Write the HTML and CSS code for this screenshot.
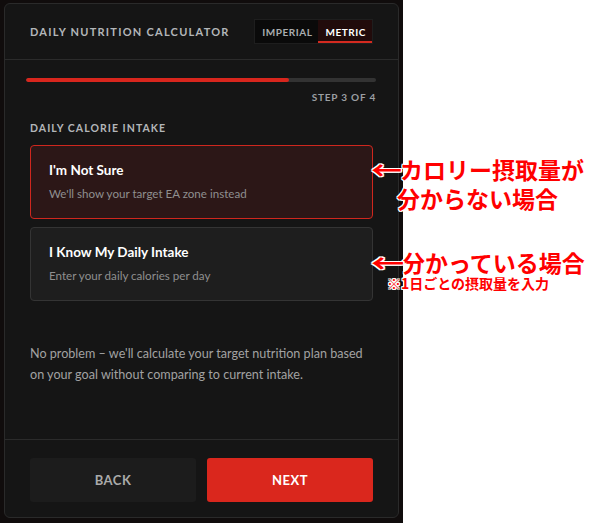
FILE: index.html
```html
<!DOCTYPE html>
<html lang="ja">
<head>
<meta charset="utf-8">
<title>Daily Nutrition Calculator</title>
<link rel="stylesheet" href="styles.css">
</head>
<body>
<div class="page">
  <div class="backdrop">
    <div class="panel">
      <header class="panel-head">
        <h1 class="title">DAILY NUTRITION CALCULATOR</h1>
        <div class="units">
          <span class="unit">IMPERIAL</span>
          <span class="unit unit-active">METRIC</span>
        </div>
      </header>
      <main class="panel-body">
        <div class="progress">
          <div class="track"><div class="fill" style="width:75%"></div></div>
          <div class="step">STEP 3 OF 4</div>
        </div>
        <h2 class="section">DAILY CALORIE INTAKE</h2>
        <div class="options">
          <div class="option option-selected">
            <div class="option-title">I'm Not Sure</div>
            <div class="option-sub">We'll show your target EA zone instead</div>
          </div>
          <div class="option">
            <div class="option-title">I Know My Daily Intake</div>
            <div class="option-sub">Enter your daily calories per day</div>
          </div>
        </div>
        <p class="note">No problem – we'll calculate your target nutrition plan based on your goal without comparing to current intake.</p>
      </main>
      <footer class="panel-foot">
        <button class="btn btn-back">BACK</button>
        <button class="btn btn-next">NEXT</button>
      </footer>
    </div>
  </div>
  <div class="anno anno-1">
    <div class="anno-line"><span class="arrow">←</span>カロリー摂取量が</div>
    <div class="anno-line anno-indent">分からない場合</div>
  </div>
  <div class="anno anno-2">
    <div class="anno-line anno-tight"><span class="arrow arrow-wide">←</span>分かっている場合</div>
    <div class="anno-small">※1日ごとの摂取量を入力</div>
  </div>
</div>
</body>
</html>
```

FILE: styles.css
```css
* { box-sizing: border-box; }
html, body { margin: 0; padding: 0; background: #ffffff; }
body { font-family: "Lato", "Liberation Sans", sans-serif; }

.page {
  position: relative;
  width: 590px;
  height: 523px;
  background: #ffffff;
}

.backdrop {
  width: 403px;
  height: 523px;
  background: #100c0c;
  padding: 3px 4px 5px 4px;
}

.panel {
  width: 395px;
  height: 515px;
  background: #151515;
  border: 1px solid #2a2a2a;
  border-radius: 6px;
  display: flex;
  flex-direction: column;
}

.panel-head {
  height: 56px;
  border-bottom: 1px solid #2b2b2b;
  display: flex;
  align-items: center;
  justify-content: space-between;
  padding: 0 25px 0 25px;
}

.title {
  margin: 0;
  font-size: 11px;
  font-weight: 700;
  letter-spacing: 1.25px;
  color: #b3b6b9;
}

.units {
  display: flex;
  background: #0a0a0a;
  border: 1px solid #1e1e1e;
  height: 25px;
}
.unit {
  display: flex;
  align-items: center;
  padding: 0 6px 0 7px;
  font-size: 10px;
  font-weight: 700;
  letter-spacing: 0.55px;
  color: #a9adb0;
}
.unit-active {
  background: #210b0b;
  color: #ffffff;
  border-bottom: 2px solid #d42a20;
  padding-top: 2px;
}

.panel-body {
  flex: 1;
  padding: 18px 25px 0 25px;
  display: flex;
  flex-direction: column;
}

.progress { margin: 0 -3px 0 -4px; }
.track {
  height: 4px;
  background: #333333;
  border-radius: 2px;
  overflow: hidden;
}
.fill {
  height: 100%;
  background: #d8261d;
  border-radius: 2px;
}
.step {
  margin-top: 9px;
  text-align: right;
  font-size: 10px;
  line-height: 12px;
  font-weight: 700;
  letter-spacing: 0.8px;
  color: #9b9fa2;
}

.section {
  margin: 19px 0 0 0;
  font-size: 10.5px;
  line-height: 13px;
  font-weight: 700;
  letter-spacing: 1.05px;
  color: #b3b6b9;
}

.options {
  margin-top: 10px;
  display: flex;
  flex-direction: column;
  gap: 8px;
}
.option {
  height: 74px;
  background: #1e1e1e;
  border: 1px solid #343434;
  border-radius: 4px;
  padding: 16px 18px 0 18px;
}
.option-selected {
  background: #2c1717;
  border-color: #cf271e;
}
.option-title {
  font-size: 13.5px;
  line-height: 16px;
  font-weight: 700;
  color: #ffffff;
}
.option-sub {
  margin-top: 9px;
  font-size: 11.6px;
  line-height: 14px;
  color: #8f8f8f;
}

.note {
  margin: 42px 0 0 0;
  font-size: 12.6px;
  line-height: 21px;
  color: #a2a2a2;
}

.panel-foot {
  border-top: 1px solid #2b2b2b;
  padding: 18px 25px 15px 25px;
  display: flex;
  gap: 11px;
}
.btn {
  flex: 1;
  height: 44px;
  border: none;
  border-radius: 3px;
  font-family: "Lato", "Liberation Sans", sans-serif;
  font-size: 13px;
  font-weight: 700;
  letter-spacing: 0.5px;
}
.btn-back { background: #1c1c1c; color: #aaaaaa; }
.btn-next { background: #da271d; color: #ffffff; }

.anno {
  position: absolute;
  font-family: "Noto Sans CJK JP", sans-serif;
  font-weight: 700;
  color: #ff0000;
  text-shadow: 1px 0 0 #fff, -1px 0 0 #fff, 0 1px 0 #fff, 0 -1px 0 #fff,
               1px 1px 0 #fff, -1px -1px 0 #fff, 1px -1px 0 #fff, -1px 1px 0 #fff;
  white-space: nowrap;
}
.anno-1 { left: 371px; top: 155px; }
.anno-2 { left: 371px; top: 249px; }
.anno-line {
  font-size: 23px;
  line-height: 29px;
}
.anno-tight { line-height: 26px; }
.arrow {
  display: inline-block;
  width: 29px;
  transform: scale(1.35, 1.1);
  transform-origin: 0 60%;
}
.arrow-wide { width: 31px; transform: scale(1.45, 1.1); }
.anno-indent { padding-left: 26px; }
.anno-small {
  margin-left: 16px;
  font-size: 14px;
  line-height: 16px;
}
```
